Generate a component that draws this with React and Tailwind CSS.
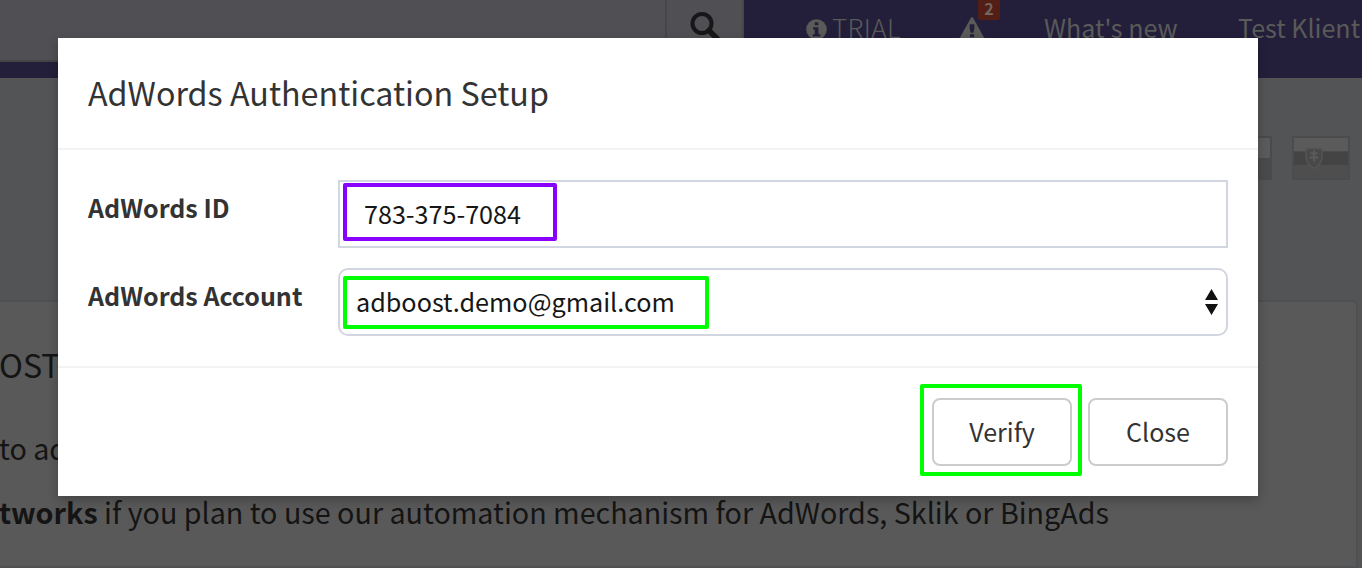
import React from "react";

const SANS = "font-['Noto_Sans_CJK_SC','Noto_Sans',sans-serif]";

function SearchIcon() {
  return (
    <svg className="h-8 w-8" viewBox="0 0 32 32" fill="none" stroke="#171717">
      <circle cx="13" cy="12.500" r="9.500" strokeWidth="4" />
      <path d="M20 19.500 L28 27.500" strokeWidth="5.400" strokeLinecap="round" />
    </svg>
  );
}

function InfoIcon() {
  return (
    <svg className="h-[21px] w-[21px]" viewBox="0 0 21 21">
      <circle cx="10.5" cy="10.5" r="10.3" fill="#5a5a58" />
      <path d="M8.8 3.2h3.6v3H8.8zM7 8.300h5.400v6.900h1.900v2.200H6.800v-2.200h1.900v-4.700H7z" fill="#231f3b" />
    </svg>
  );
}

function WarningIcon() {
  return (
    <svg className="h-[24px] w-[26px]" viewBox="0 0 26 24">
      <path d="M12 .8Q13 -.6 14 .8L25.600 21.500Q26 23.600 24 23.600H2Q0 23.600 .4 21.500Z" fill="#5a5a58" />
      <path d="M10.700 7.200h4.700v4.600l-1 4h-2.700l-1-4zM10.900 17.200h4.300v3h-4.300z" fill="#231f3b" />
    </svg>
  );
}

function TopBar() {
  return (
    <header className="flex h-[78px] items-start bg-[#231f3b]">
      <div className="flex h-[62px] w-[744px] border-b-2 border-[#454546] bg-[#504f54]">
        <div className="flex-1" />
        <div className="flex w-[79px] justify-center border-x-2 border-[#47474a] pt-[11px]">
          <SearchIcon />
        </div>
      </div>
      <nav className="flex flex-1 items-start pt-[12px] text-[25.07px] leading-[30px] whitespace-nowrap text-[#5a5a58]">
        <div className="ml-[62px] flex w-[153px] gap-[5px]">
          <span className="pt-[7px]"><InfoIcon /></span>
          <span className="text-[26px] font-light tracking-[0.4px]">TRIAL</span>
        </div>
        <div className="relative w-[85px] pt-[5px]">
          <WarningIcon />
          <span className="absolute -top-[12px] left-[19px] flex h-5 w-[22px] justify-center rounded-b-[3px] bg-[#531e16] text-[16px] leading-[16px] font-bold text-[#72645f]">
            2
          </span>
        </div>
        <span className="w-[194px]">What's new</span>
        <span>Test Klient</span>
      </nav>
    </header>
  );
}

function Flags() {
  return (
    <div className="flex h-[44px] justify-end gap-5 pr-3">
      <svg className="h-11 w-[58px]" viewBox="0 0 58 44">
        <rect width="58" height="44" fill="#4a4b4b" />
        <rect x="2" y="2" width="54" height="20" fill="#5b5b5b" />
      </svg>
      <svg className="h-11 w-[58px]" viewBox="0 0 58 44">
        <rect width="58" height="44" fill="#4b4c4c" />
        <rect x="2" y="2" width="54" height="13.5" fill="#5b5b5b" />
        <rect x="2" y="15.500" width="54" height="13.500" fill="#444444" />
        <rect x="2" y="29" width="54" height="13" fill="#4e4e4e" />
        <path d="M14 12.500h16v8q0 8-8 12q-8-4-8-12z" fill="#494949" stroke="#565656" strokeWidth="1.300" />
        <path d="M22 14.500v11M18.500 17.500h7M17.500 21.500h9" stroke="#5c5c5c" strokeWidth="1.800" />
      </svg>
    </div>
  );
}

function PageContent() {
  return (
    <main className="bg-[#525455]">
      <div className="h-[222px] pt-[58px]">
        <Flags />
      </div>
      <section className="h-[268px] w-[1358px] overflow-hidden rounded-tr-md border-y-2 border-r-2 border-[#4e5051] bg-[#595959] whitespace-nowrap text-[#141414]">
        <h2 className="-ml-px mt-[41px] text-[32.2px] leading-[42px]">OST</h2>
        <p className="-ml-px mt-[43px] text-[28.7px] leading-[40px]">to add</p>
        <p className="-ml-px mt-[24px] text-[28.7px] leading-[40px]">
          <b>tworks</b> if you plan to use our automation mechanism for AdWords, Sklik or BingAds
        </p>
      </section>
      <div className="h-3" />
    </main>
  );
}

function SelectArrows() {
  return (
    <svg className="h-[26px] w-[13px]" viewBox="0 0 13 26" fill="#111">
      <path d="M6.500 0 13 11H0zM6.500 26 0 15H13z" />
    </svg>
  );
}

function SetupDialog() {
  return (
    <div role="dialog" className="absolute top-[38px] left-[58px] flex h-[458px] w-[1200px] flex-col bg-white text-[#333] shadow-[0_4px_10px_rgba(0,0,0,0.25)]">
      <div className="flex h-[112px] items-center border-b-2 border-[#f3f3f3] px-[30px]">
        <h1 className="-mt-[2px] text-[32.25px] leading-[40px]">AdWords Authentication Setup</h1>
      </div>
      <div className="flex h-[218px] flex-col gap-5 border-b-2 border-[#f3f3f3] px-[30px] pt-[30px]">
        <div className="flex">
          <label className="w-[250px] pt-[7px] text-[25px] leading-[40px] font-bold">AdWords ID</label>
          <div className="flex h-[68px] flex-1 items-start border-2 border-[#d2d6e0] pt-px pl-[3px]">
            <div className="flex h-[58px] w-[214px] items-center rounded-[2px] border-4 border-[#8a00ff] pt-[2px] pl-[17px] text-[25.15px] leading-[30px] text-[#161616]">
              783-375-7084
            </div>
          </div>
        </div>
        <div className="flex">
          <label className="w-[250px] pt-[7px] text-[25px] leading-[40px] font-bold">AdWords Account</label>
          <div className="flex h-[68px] flex-1 items-center justify-between rounded-[10px] border-2 border-[#d2d6e0] pr-2 pl-[3px]">
            <div className="flex h-[53px] w-[366px] items-center rounded-[2px] border-4 border-[#00ff00] pb-[2px] pl-[9px] text-[25.2px] leading-[30px] text-[#161616]">
              adboost.demo@gmail.com
            </div>
            <SelectArrows />
          </div>
        </div>
      </div>
      <div className="flex items-start justify-end pt-4 pr-[30px] text-[25.07px] leading-[30px]">
        <div className="mr-[6px] flex h-[92px] w-[162px] items-start rounded-[2px] border-4 border-[#00ff00] pt-[10px] pl-2">
          <button className="h-[68px] w-[140px] rounded-lg border-2 border-[#ccc] pb-[2px]">Verify</button>
        </div>
        <button className="mt-[14px] h-[68px] w-[140px] rounded-lg border-2 border-[#ccc] pb-[2px]">Close</button>
      </div>
    </div>
  );
}

export default function App() {
  return (
    <div className={`relative h-[568px] w-[1362px] overflow-hidden ${SANS}`}>
      <TopBar />
      <PageContent />
      <SetupDialog />
    </div>
  );
}
